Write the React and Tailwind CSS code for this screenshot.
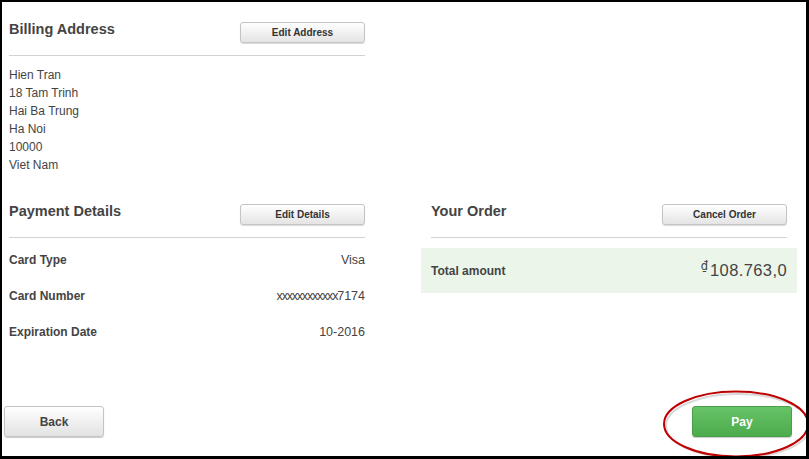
import React from 'react';

const font = { fontFamily: '"Liberation Sans", Arial, sans-serif' };

function GrayButton({ children, className = '' }) {
  return (
    <button
      className={`h-[21px] w-[125px] rounded-[3px] border border-[#c4c4c4] bg-gradient-to-b from-white to-[#e4e4e4] text-[10px] font-bold text-[#333] shadow-[0_1px_1px_rgba(0,0,0,0.15)] ${className}`}
    >
      {children}
    </button>
  );
}

function SectionHeader({ title, action }) {
  return (
    <div>
      <div className="flex items-start justify-between">
        <h2 className="h-[18px] text-[14.5px] font-bold leading-[18px] text-[#444]">{title}</h2>
        <GrayButton className="mt-[2px]">{action}</GrayButton>
      </div>
      <div className="mt-[12px] border-t border-[#d2d2d2]" />
    </div>
  );
}

const address = ['Hien Tran', '18 Tam Trinh', 'Hai Ba Trung', 'Ha Noi', '10000', 'Viet Nam'];

function DetailRow({ label, children }) {
  return (
    <div className="flex h-[18px] items-baseline justify-between leading-[18px]">
      <span className="text-[12px] font-bold text-[#444]">{label}</span>
      <span className="text-[12.5px] text-[#444]">{children}</span>
    </div>
  );
}

export default function App() {
  return (
    <div
      style={font}
      className="relative flex h-[459px] w-[809px] flex-col overflow-hidden border-b-[3px] border-l-2 border-r-[3px] border-t-2 border-black bg-white"
    >
      <div className="pl-[7px] pt-[18px]">
        {/* billing */}
        <section className="w-[356px]">
          <SectionHeader title="Billing Address" action="Edit Address" />
          <div className="pt-[10px] text-[12px] leading-[18px] text-[#444]">
            {address.map((line) => (
              <div key={line}>{line}</div>
            ))}
          </div>
        </section>

        <div className="mt-[28px] flex gap-[66px]">
          {/* payment */}
          <section className="w-[356px]">
            <SectionHeader title="Payment Details" action="Edit Details" />
            <div className="flex flex-col gap-[18px] pt-[13px]">
              <DetailRow label="Card Type">Visa</DetailRow>
              <DetailRow label="Card Number">
                <span className="tracking-[-1.2px]">xxxxxxxxxxxx</span>7174
              </DetailRow>
              <DetailRow label="Expiration Date">10-2016</DetailRow>
            </div>
          </section>

          {/* order */}
          <section className="w-[356px]">
            <SectionHeader title="Your Order" action="Cancel Order" />
            <div className="-mx-[10px] mt-[10px] flex h-[45px] items-center justify-between bg-[#ebf5ea] px-[10px]">
              <span className="text-[12px] font-bold text-[#444]">Total amount</span>
              <span className="flex items-start text-[16.5px] tracking-[0.4px] text-[#444]">
                <span className="mr-[2px] mt-[3px] font-['DejaVu_Sans',sans-serif] text-[11.5px] leading-none tracking-normal">₫</span>
                108.763,0
              </span>
            </div>
          </section>
        </div>
      </div>

      <div className="mt-auto flex items-center justify-between pb-[19px] pl-[2px] pr-[14px]">
        <button className="h-[31px] w-[100px] rounded-[3px] border border-[#c4c4c4] bg-gradient-to-b from-white to-[#e2e2e2] text-[12px] font-bold text-[#444] shadow-[0_1px_1px_rgba(0,0,0,0.2)]">
          Back
        </button>
        <button className="h-[31px] w-[100px] rounded-[3px] border border-[#4a9e4a] bg-gradient-to-b from-[#67c367] to-[#4cab4c] text-[12px] font-bold text-white shadow-[0_1px_1px_rgba(0,0,0,0.2)]">
          Pay
        </button>
      </div>

      {/* annotation ring */}
      <svg className="pointer-events-none absolute left-[658px] top-[385px]" width="154" height="76" viewBox="0 0 154 76">
        <ellipse cx="78" cy="39" rx="72" ry="32" fill="none" stroke="#d8d8d8" strokeWidth="2" />
        <ellipse cx="76" cy="37" rx="72" ry="32.5" fill="none" stroke="#c00000" strokeWidth="2" />
      </svg>
    </div>
  );
}
